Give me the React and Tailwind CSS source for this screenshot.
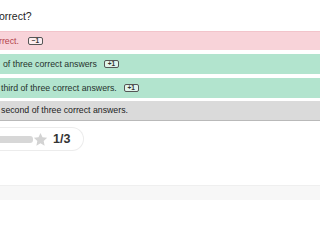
const Badge = ({ children, gap = "ml-[7px]" }) => (
  <span className={`${gap} inline-flex h-[8px] w-[15px] items-center justify-center rounded-[2px] border border-[#555] bg-white/60 text-[6.5px] font-bold leading-none text-[#333]`}>
    {children}
  </span>
);

const Row = ({ bg, text, children, badge, gap, h = "h-[20px]" }) => (
  <div className={`flex items-center ${h} ${bg} ${text} text-[8.75px] leading-none whitespace-nowrap`}>
    {children}
    {badge && <Badge gap={gap}>{badge}</Badge>}
  </div>
);

export default function App() {
  return (
    <div className="flex h-[200px] w-[320px] flex-col overflow-hidden bg-white font-['Liberation_Sans',Arial,sans-serif]">
      <div className="h-[185px]">
        <p className="ml-[-1px] pt-[10px] text-[10.5px] leading-[13px] text-[#1e1e1e]">orrect?</p>
        <div className="mt-[8px] flex flex-col">
          <Row bg="bg-[#f8d3d9] border-t border-[#f2c4cb]" text="text-[#b3434b]" h="h-[19px]" badge="−1" gap="ml-[9px]">
            <span className="ml-[-1px]">rrect.</span>
          </Row>
          <div className="h-[4px]" />
          <Row bg="bg-[#b2e4ce]" text="text-[#26332d]" badge="+1">
            <span className="ml-[3px]">of three correct answers</span>
          </Row>
          <div className="h-[4px]" />
          <Row bg="bg-[#b2e4ce]" text="text-[#26332d]" badge="+1">
            <span className="ml-[1px]">third of three correct answers.</span>
          </Row>
          <div className="h-[3px]" />
          <Row bg="bg-[#dadada] border-b border-[#b9b9b9]" text="text-[#222]">
            <span className="ml-[1px]">second of three correct answers.</span>
          </Row>
        </div>
        <div className="mt-[6px] flex h-[24px] w-[84px] items-center rounded-r-full border border-l-0 border-[#ececec] bg-white">
          <div className="h-[7px] w-[33px] rounded-r-[3px] bg-[#d7d7d7]" />
          <svg width="15" height="15" viewBox="0 0 24 24" className="shrink-0">
            <polygon points="12,1.5 15.2,8.4 22.7,9.2 17.1,14.3 18.6,21.8 12,18 5.4,21.8 6.9,14.3 1.3,9.2 8.8,8.4" fill="#d3d3d3" />
          </svg>
          <span className="ml-[5px] text-[12.5px] font-bold leading-none text-[#333]">1/3</span>
        </div>
      </div>
      <div className="flex-1 border-t border-[#efefef] bg-[#f7f7f7]" />
    </div>
  );
}
